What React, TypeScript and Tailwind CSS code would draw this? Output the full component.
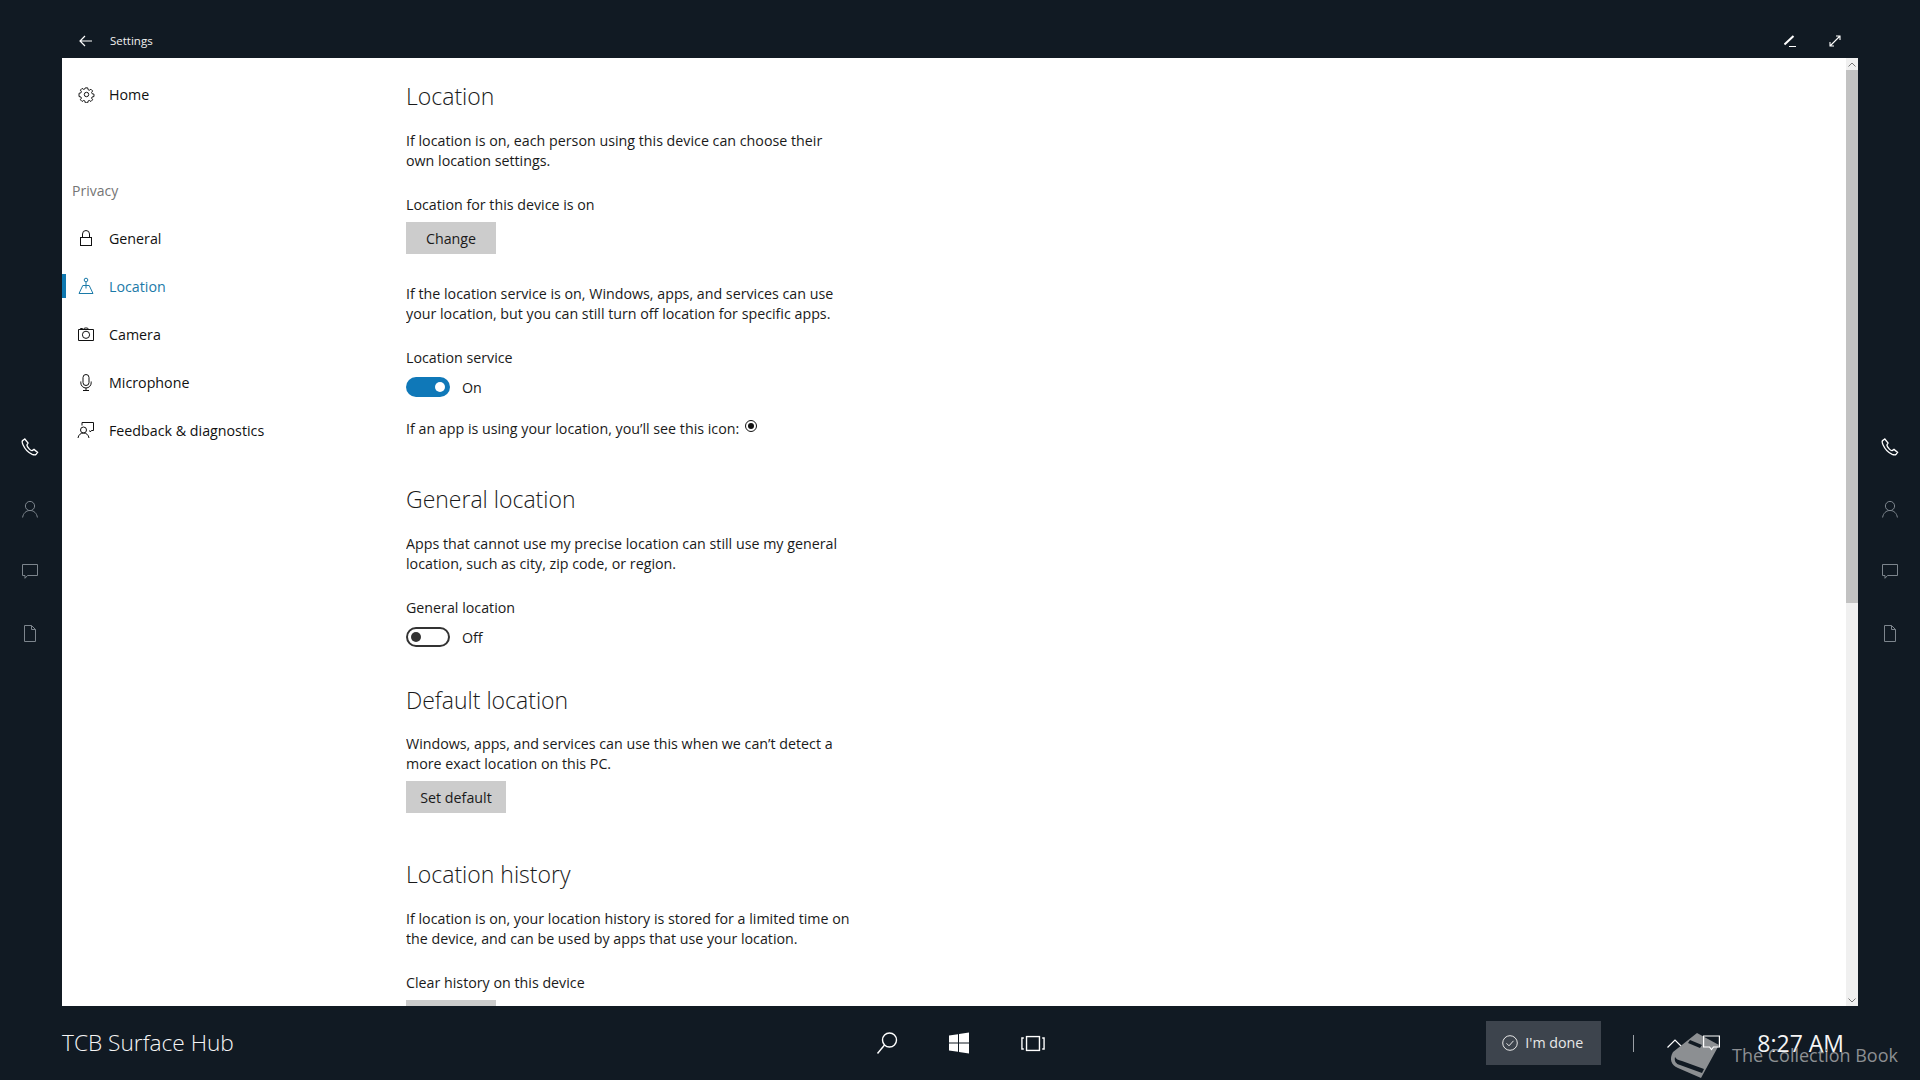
import type { ReactNode } from "react";

const ink = "#111a23";

function Svg({ size = 20, strokeWidth = 1, children }: { size?: number; strokeWidth?: number; children: ReactNode }) {
  return (
    <svg width={size} height={size} viewBox="0 0 20 20" fill="none" stroke="currentColor" strokeWidth={strokeWidth}>
      {children}
    </svg>
  );
}

const GearIcon = () => (
  <Svg size={17} strokeWidth={1.15}>
    <circle cx="10" cy="10" r="2.6" />
    <path d="M8.6 2.2h2.8l.5 2.2 1.4.6 1.9-1.2 2 2-1.2 1.9.6 1.4 2.2.5v2.8l-2.2.5-.6 1.4 1.2 1.9-2 2-1.9-1.2-1.4.6-.5 2.2H8.6l-.5-2.2-1.4-.6-1.9 1.2-2-2 1.2-1.9-.6-1.4-2.2-.5V8.6l2.2-.5.6-1.4-1.2-1.9 2-2 1.9 1.2 1.4-.6z" />
  </Svg>
);
const LockIcon = () => (
  <Svg>
    <rect x="4.5" y="9.5" width="11" height="8" />
    <path d="M6.5 9.5V6a3.5 3.5 0 0 1 7 0v3.5" />
  </Svg>
);
const PinIcon = () => (
  <Svg>
    <circle cx="10" cy="4" r="1.8" />
    <path d="M10 5.8v6.7M6.8 9.5h6.4L17 17.5H3z" />
  </Svg>
);
const CameraIcon = () => (
  <Svg>
    <path d="M2.5 5.5h15v11h-15zM4.5 5.5v-1h2v1M7.5 5.5l1-1.5h3l1 1.5" />
    <circle cx="10" cy="10.8" r="3.6" />
  </Svg>
);
const MicIcon = () => (
  <Svg>
    <rect x="7" y="2.5" width="6" height="11" rx="3" />
    <path d="M4.8 9.5v1.3a5.2 5.2 0 0 0 10.4 0V9.5M10 16v2M7 18.5h6" />
  </Svg>
);
const FeedbackIcon = () => (
  <Svg>
    <path d="M6 5.5V2.5h11.5v8h-2.2l-1 1.5-.8-1.5" />
    <circle cx="7.5" cy="10" r="3" />
    <path d="M2 18c.5-3.2 2.6-5 5.5-5s5 1.8 5.5 5" />
  </Svg>
);
const PhoneIcon = () => (
  <Svg strokeWidth={1.3}>
    <path d="M4.8 2 2.600 3.600c-.7.6-.6 2 .4 4.200 1.800 4 5.400 8 9.200 9.600 1.800.7 3.200.7 4-.2l1.400-1.800-3.600-3-1.800 1.200c-.7.3-1.600-.2-2.800-1.500C8 10.600 7 9 6.900 8.200c0-.6.2-1 .8-1.500l.4-.7z" />
  </Svg>
);
const PersonIcon = () => (
  <Svg>
    <circle cx="10" cy="7" r="4.6" />
    <path d="M2.600 18.500c.6-4.200 3.500-7 7.400-7s6.800 2.800 7.400 7" />
  </Svg>
);
const ChatIcon = () => (
  <Svg>
    <path d="M2.500 3.500h15v11H7.500l-2.500 2.800v-2.800H2.500z" />
  </Svg>
);
const FileIcon = () => (
  <Svg>
    <path d="M4.500 2.500h7l4 4v12h-11zM11.500 2.500v4h4" />
  </Svg>
);

function NavItem({ icon, label, active }: { icon: ReactNode; label: string; active?: boolean }) {
  return (
    <div className={`flex h-12 items-center ${active ? "text-[#1b7aa8]" : "text-[#111]"}`}>
      <div className={`h-6 w-1 ${active ? "bg-[#0f78b0]" : ""}`} />
      <div className="ml-[10px] flex w-5 justify-center">{icon}</div>
      <span className="ml-[13px] pt-[2px] text-[14.25px] leading-5">{label}</span>
    </div>
  );
}

function Heading({ className, children }: { className?: string; children: ReactNode }) {
  return <h2 className={`h-8 text-[23px] leading-8 font-light text-[#1a1a1a] ${className}`}>{children}</h2>;
}

function Para({ className, children }: { className?: string; children: ReactNode }) {
  return <p className={`text-[14.25px] leading-5 text-[#1a1a1a] ${className}`}>{children}</p>;
}

function Btn({ className, children }: { className?: string; children?: ReactNode }) {
  return (
    <button className={`flex h-8 shrink-0 items-center justify-center bg-[#cccccc] pt-[2px] text-[14.25px] text-[#1a1a1a] ${className}`}>
      {children}
    </button>
  );
}

function Toggle({ on, label }: { on: boolean; label: string }) {
  return (
    <div className="mt-[9px] flex h-5 items-center">
      {on ? (
        <div className="flex h-5 w-11 items-center justify-end rounded-full bg-[#0f78b8] pr-[5px]">
          <div className="h-[10px] w-[10px] rounded-full bg-white" />
        </div>
      ) : (
        <div className="flex h-5 w-11 items-center rounded-full border-2 border-[#333] pl-[3px]">
          <div className="h-[10px] w-[10px] rounded-full bg-[#333]" />
        </div>
      )}
      <span className="ml-3 pt-[2px] text-[14.25px] text-[#1a1a1a]">{label}</span>
    </div>
  );
}

function Rail({ className }: { className?: string }) {
  return (
    <div className={`flex w-[62px] shrink-0 flex-col items-center pt-[358px] ${className}`}>
      <div className="flex h-[62px] items-center text-white">
        <PhoneIcon />
      </div>
      <div className="flex h-[62px] items-center text-[#7d858d]">
        <PersonIcon />
      </div>
      <div className="flex h-[62px] items-center text-[#7d858d]">
        <ChatIcon />
      </div>
      <div className="flex h-[62px] items-center text-[#7d858d]">
        <FileIcon />
      </div>
    </div>
  );
}

export default function App() {
  return (
    <div
      className="relative flex h-screen w-full flex-col overflow-hidden text-white"
      style={{ backgroundColor: ink, fontFamily: '"Open Sans", "Noto Sans", sans-serif' }}
    >
      {/* Title bar */}
      <div className="flex h-[58px] shrink-0 items-center pt-6">
        <div className="ml-[78px] flex w-4 justify-center">
          <svg width="14" height="12" viewBox="0 0 14 12" fill="none" stroke="currentColor" strokeWidth={1.2}>
            <path d="M13 6H1M6 1 1 6l5 5" />
          </svg>
        </div>
        <span className="ml-4 text-[11.5px] leading-4 text-[#f2f2f2]">Settings</span>
        <div className="ml-auto mr-[79px] flex items-center gap-[33px]">
          <svg width="12" height="12" viewBox="0 0 12 12" fill="none" stroke="currentColor">
            <path d="M.5 9.500 9.500 1" strokeWidth={2} />
            <path d="M5 11.500h7" strokeWidth={1} />
          </svg>
          <svg width="12" height="12" viewBox="0 0 12 12" fill="none" stroke="currentColor" strokeWidth={1.1}>
            <path d="M1 11 11 1M7 1h4v4M1 7v4h4" />
          </svg>
        </div>
      </div>

      <div className="flex min-h-0 flex-1">
        <Rail className="pr-[2px]" />

        {/* Settings window */}
        <div className="flex min-w-0 flex-1 bg-white">
          <nav className="w-[344px] shrink-0 pt-3">
            <NavItem icon={<GearIcon />} label="Home" />
            <div className="mt-12 flex h-12 items-center pl-[10px] text-[14px] text-[#757575]">Privacy</div>
            <NavItem icon={<LockIcon />} label="General" />
            <NavItem icon={<PinIcon />} label="Location" active />
            <NavItem icon={<CameraIcon />} label="Camera" />
            <NavItem icon={<MicIcon />} label="Microphone" />
            <NavItem icon={<FeedbackIcon />} label="Feedback & diagnostics" />
          </nav>

          <main className="flex min-h-0 flex-1 flex-col overflow-hidden pt-[22px]">
            <Heading>Location</Heading>
            <Para className="mt-[19px]">
              If location is on, each person using this device can choose their
              <br />
              own location settings.
            </Para>
            <Para className="mt-6">Location for this device is on</Para>
            <Btn className="mt-[7px] w-[90px]">Change</Btn>
            <Para className="mt-[30px]">
              If the location service is on, Windows, apps, and services can use
              <br />
              your location, but you can still turn off location for specific apps.
            </Para>
            <Para className="mt-6">Location service</Para>
            <Toggle on label="On" />
            <Para className="mt-[22px] flex items-start">
              If an app is using your location, you’ll see this icon:
              <svg width="14" height="14" viewBox="0 0 14 14" className="ml-[5px] text-[#111]">
                <circle cx="7" cy="7" r="5.5" fill="none" stroke="currentColor" />
                <circle cx="7" cy="7" r="3" fill="currentColor" />
              </svg>
            </Para>

            <Heading className="mt-[44px]">General location</Heading>
            <Para className="mt-[19px]">
              Apps that cannot use my precise location can still use my general
              <br />
              location, such as city, zip code, or region.
            </Para>
            <Para className="mt-6">General location</Para>
            <Toggle on={false} label="Off" />

            <Heading className="mt-[37px]">Default location</Heading>
            <Para className="mt-[18px]">
              Windows, apps, and services can use this when we can’t detect a
              <br />
              more exact location on this PC.
            </Para>
            <Btn className="mt-[7px] w-[100px]">Set default</Btn>

            <Heading className="mt-[45px]">Location history</Heading>
            <Para className="mt-[19px]">
              If location is on, your location history is stored for a limited time on
              <br />
              the device, and can be used by apps that use your location.
            </Para>
            <Para className="mt-6">Clear history on this device</Para>
            <Btn className="mt-[7px] w-[90px]" />
          </main>

          {/* Scrollbar */}
          <div className="flex w-3 shrink-0 flex-col bg-[#f0f0f0]">
            <div className="flex h-3 items-center justify-center text-[#777]">
              <svg width="8" height="5" viewBox="0 0 8 5" fill="none" stroke="currentColor">
                <path d="M.5 4.500 4 1l3.500 3.500" />
              </svg>
            </div>
            <div className="h-[533px] bg-[#c2c2c2]" />
            <div className="mt-auto flex h-3 items-center justify-center text-[#777]">
              <svg width="8" height="5" viewBox="0 0 8 5" fill="none" stroke="currentColor">
                <path d="M.5.5 4 4 7.500.5" />
              </svg>
            </div>
          </div>
        </div>

        <Rail className="pl-[2px]" />
      </div>

      {/* Bottom bar */}
      <footer className="relative flex h-[74px] shrink-0 items-center pl-[62px]">
        <span className="w-[800px] text-[22.700px] font-light text-[#f5f5f5]">TCB Surface Hub</span>
        <div className="ml-[13px] flex items-center gap-[48px]">
          <svg width="24" height="24" viewBox="0 0 24 24" fill="none" stroke="white" strokeWidth={1.4}>
            <circle cx="14.500" cy="9" r="7" />
            <path d="M9.500 14 2.500 22.500" />
          </svg>
          <svg width="24" height="24" viewBox="0 0 24 24" fill="white">
            <path d="M2 4.500 11 3.200v8.300H2zM12 3 22 1.500v10H12zM2 12.500h9v8.300L2 19.500zM12 12.500h10v10L12 21z" />
          </svg>
          <svg width="24" height="17" viewBox="0 0 26 18" fill="none" stroke="white" strokeWidth={1.500} className="ml-[2px]">
            <rect x="6" y="1.500" width="14" height="15" />
            <path d="M3 3H1v12h2M23 3h2v12h-2" />
          </svg>
        </div>
        <div className="ml-auto flex items-center pr-[76px]">
          <div className="flex h-11 w-[115px] items-center bg-[#3d444d] pl-4 text-[#e8e8e8]">
            <svg width="16" height="16" viewBox="0 0 16 16" fill="none" stroke="currentColor">
              <circle cx="8" cy="8" r="7.300" />
              <path d="m4.500 8.300 2.500 2.500 4.500-5" />
            </svg>
            <span className="ml-[7px] text-[14.25px]">I'm done</span>
          </div>
          <div className="ml-[32px] h-[17px] w-px bg-[#9a9fa5]" />
          <svg width="16" height="9" viewBox="0 0 16 9" fill="none" stroke="white" strokeWidth={1.2} className="ml-[33px]">
            <path d="M.5 8.500 8 1l7.500 7.500" />
          </svg>
          <svg width="17" height="17" viewBox="0 0 17 17" fill="none" stroke="white" strokeWidth={1.2} className="relative z-10 ml-[20px]">
            <path d="M.6 1h15.800v11H10.500l-2 2.500-2-2.500H.6z" />
          </svg>
          <span className="ml-[37px] text-[23px] leading-none text-[#f5f5f5]">8:27 AM</span>
        </div>

        {/* Watermark */}
        <div className="absolute top-[25px] left-[1668px] flex items-start text-[#8c8f92]">
          <svg width="56" height="50" viewBox="0 0 56 50" fill="currentColor">
            <path d="M29 2 51 14 33 47 10 37C3 34 1 28 5 21z" />
            <path d="M7 26c-1 4 1 7 5 8l22 8 2-4-22-8c-4-1-6-2-7-4z" fill="#111a23" />
            <path d="M22 9l12 5-2 3-12-5z" fill="#111a23" />
          </svg>
          <span className="ml-[8px] mt-[15px] text-[18px] leading-none whitespace-nowrap">The Collection Book</span>
        </div>
      </footer>
    </div>
  );
}
